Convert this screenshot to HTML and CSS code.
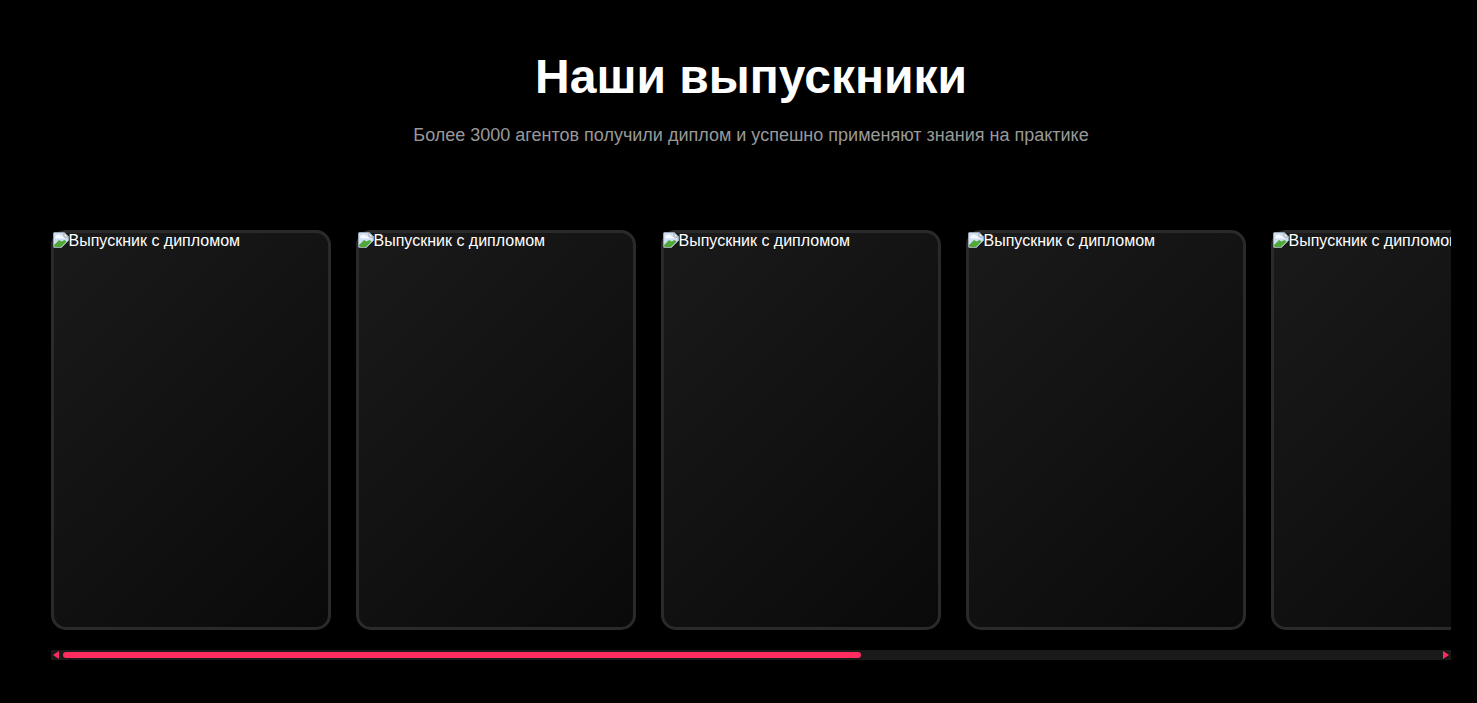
FILE: index.html
```html
<!DOCTYPE html>
<html lang="ru">
<head>
    <meta charset="UTF-8">
    <meta name="viewport" content="width=device-width, initial-scale=1.0">
    <title>Наши выпускники</title>
    <link rel="stylesheet" href="styles.css">
</head>
<body>
    <svg class="sprite">
        <symbol id="broken-image" viewBox="0 0 16 16">
            <path class="sheet" d="M1.500 .5h9.500l4.500 4.500v3.500l-7 7H1.500a1 1 0 0 1-1-1V1.500a1 1 0 0 1 1-1z"/>
            <path class="cloud" d="M2 5c1-2 3-3 5-2 1 .5 2 1.500 4 1.500l1.500 2H3z"/>
            <path class="hill" d="M1 14V13L6 8l2.500 1.500 3-1.500 2 1.500-5.500 5.500H2z"/>
            <path class="fold" d="M11 .5V5h4.500z"/>
        </symbol>
    </svg>

    <section class="graduates">
        <h1>Наши выпускники</h1>
        <p class="subtitle">Более 3000 агентов получили диплом и успешно применяют знания на практике</p>

        <div class="gallery">
            <div class="card">
                <svg class="broken"><use href="#broken-image"/></svg>
                <span>Выпускник с дипломом</span>
            </div>
            <div class="card">
                <svg class="broken"><use href="#broken-image"/></svg>
                <span>Выпускник с дипломом</span>
            </div>
            <div class="card">
                <svg class="broken"><use href="#broken-image"/></svg>
                <span>Выпускник с дипломом</span>
            </div>
            <div class="card">
                <svg class="broken"><use href="#broken-image"/></svg>
                <span>Выпускник с дипломом</span>
            </div>
            <div class="card">
                <svg class="broken"><use href="#broken-image"/></svg>
                <span>Выпускник с дипломом</span>
            </div>
        </div>

        <div class="scrollbar">
            <span class="arrow arrow-left"></span>
            <span class="thumb"></span>
            <span class="arrow arrow-right"></span>
        </div>
    </section>
</body>
</html>
```

FILE: styles.css
```css
html, body { margin: 0; height: 703px; overflow: hidden; background: #000; }
body { font-family: "Liberation Sans", Arial, sans-serif; color: #fff; }

.sprite { display: none; }

.graduates { width: 1400px; margin-left: 51px; padding-top: 48px; }

h1 { margin: 0; font-size: 48px; line-height: 58px; font-weight: 700; text-align: center; }
.subtitle { margin: 18px 0 0; font-size: 18px; line-height: 22px; color: #999; text-align: center; }

.gallery { display: flex; gap: 25px; margin-top: 84px; overflow: hidden; }
.card {
    flex: 0 0 280px;
    box-sizing: border-box;
    height: 400px;
    display: flex;
    align-items: flex-start;
    border: 3px solid #2a2a2a;
    border-radius: 15px;
    background: linear-gradient(135deg, #1a1a1a, #0a0a0a);
    font-size: 16px;
    line-height: 18px;
    white-space: nowrap;
}
.card span { margin: -1px 0 0 -0.5px; }
.broken { flex: none; width: 16px; height: 16px; margin: -1px 0 0 -1px; }
.sheet { fill: #cfdff3; stroke: #9aa4ae; stroke-width: 1; }
.cloud { fill: #f6f9fd; }
.hill { fill: #4fa838; }
.fold { fill: #fff; stroke: #9aa4ae; stroke-width: 1; }

.scrollbar { display: flex; align-items: center; height: 10px; margin-top: 20px; background: #1a1a1a; }
.arrow { width: 6px; height: 8px; background: #ff2d5f; }
.arrow-left { margin-left: 2px; clip-path: polygon(0 50%, 100% 0, 100% 100%); }
.arrow-right { margin-left: auto; margin-right: 2px; clip-path: polygon(0 0, 100% 50%, 0 100%); }
.thumb { width: 798px; height: 6px; margin-left: 4px; border-radius: 3px; background: #ff2d5f; }
```
